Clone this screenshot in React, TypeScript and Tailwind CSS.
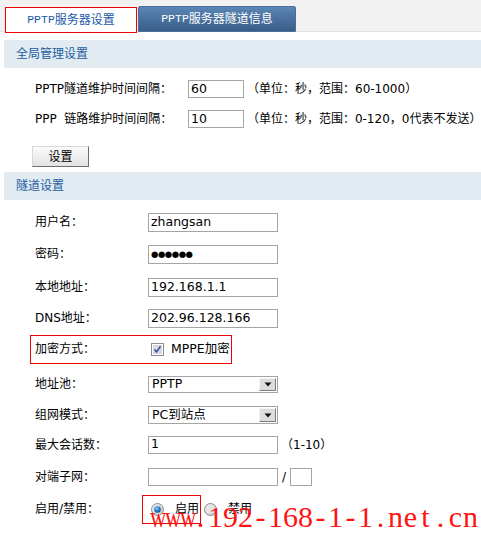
import React from "react";

const FONT = "font-['DejaVu_Sans','Noto_Sans_CJK_SC',sans-serif]";

function Input({ w = "w-[130px]", h = "h-[19px]", children }: { w?: string; h?: string; children?: React.ReactNode }) {
  return (
    <div className={`${w} ${h} border border-[#a5a5a5] bg-white flex items-center pl-[2px] text-[12.5px] text-black leading-none overflow-hidden`}>
      {children}
    </div>
  );
}

function Select({ h, children }: { h: string; children: React.ReactNode }) {
  return (
    <div className={`w-[130px] ${h} border border-[#a5a5a5] bg-white flex items-stretch text-[12.5px] text-black leading-none`}>
      <div className="flex-1 flex items-center pl-[3px]">{children}</div>
      <div className="w-[17px] m-[1px] bg-[#dcdcdc] border border-t-[#f4f4f4] border-l-[#f4f4f4] border-b-[#7c7c7c] border-r-[#7c7c7c] flex items-center justify-center">
        <svg width="8" height="5" viewBox="0 0 8 5">
          <path d="M0.5 0.5 H7.5 L4 4.5 Z" fill="#111" />
        </svg>
      </div>
    </div>
  );
}

function Radio({ on }: { on: boolean }) {
  return (
    <svg width="13" height="13" viewBox="0 0 13 13" className="shrink-0">
      <defs>
        <linearGradient id={on ? "rgOn" : "rgOff"} x1="0" y1="0" x2="1" y2="1">
          <stop offset="0" stopColor="#f4f4f4" />
          <stop offset="1" stopColor="#c4c4c4" />
        </linearGradient>
        <radialGradient id="dot" cx="0.4" cy="0.35" r="0.7">
          <stop offset="0" stopColor="#8fd0ff" />
          <stop offset="0.5" stopColor="#2a82d8" />
          <stop offset="1" stopColor="#123f86" />
        </radialGradient>
      </defs>
      <circle cx="6.5" cy="6.5" r="6" fill={`url(#${on ? "rgOn" : "rgOff"})`} stroke="#8c8c8c" strokeWidth="1" />
      {on ? <circle cx="6.5" cy="6.5" r="3.3" fill="url(#dot)" /> : <circle cx="6.5" cy="6.5" r="3.8" fill="#e6e6e6" />}
    </svg>
  );
}

function Checkbox() {
  return (
    <svg width="13" height="13" viewBox="0 0 13 13" className="shrink-0">
      <rect x="0.5" y="0.5" width="12" height="12" fill="#fff" stroke="#8e8e8e" />
      <rect x="2" y="2" width="9" height="9" fill="#d6dbe6" />
      <path d="M3.5 6.5 L5.5 9 L9.5 3.2" fill="none" stroke="#3f4fa0" strokeWidth="1.6" />
    </svg>
  );
}

function Row({ h, label, children }: { h: string; label: string; children: React.ReactNode }) {
  return (
    <div className={`${h} flex items-center pl-[35px]`}>
      <div className="w-[113px] shrink-0">{label}</div>
      {children}
    </div>
  );
}

const WM = "www.192-168-1-1.net.cn".split("");

export default function App() {
  return (
    <div className={`relative w-[481px] h-[534px] bg-white overflow-hidden text-[12px] text-black ${FONT}`}>
      {/* Tabs */}
      <div className="h-[32px] bg-[#f2f2f2] border-b border-[#e3e3e3] flex pl-[5px] gap-[1px]">
        <div className="mt-[7px] h-[26px] w-[132px] border border-[#f00000] bg-white flex items-center justify-center text-[12px] text-[#1a5aa6] leading-none">
          <span className="font-['Liberation_Mono',monospace] text-[11.5px]">PPTP</span>
          <span>服务器设置</span>
        </div>
        <div className="mt-[6px] h-[26px] w-[158px] rounded-t-[2px] border border-[#4c6f98] bg-gradient-to-b from-[#5b86b6] to-[#385d89] flex items-center justify-center text-[12px] text-white leading-none">
          <span className="font-['Liberation_Mono',monospace] text-[11.5px]">PPTP</span>
          <span>服务器隧道信息</span>
        </div>
      </div>

      {/* 全局管理设置 */}
      <div className="mt-[8px] ml-[4px] h-[28px] bg-[#e2ebf2] flex items-center pl-[12px] text-[#1d5d9f]">
        全局管理设置
      </div>
      <div className="pt-[6px]">
        <div className="h-[30px] flex items-center pl-[35px]">
          <div className="w-[153px] shrink-0">PPTP隧道维护时间间隔：</div>
          <Input w="w-[56px]" h="h-[18px]">60</Input>
          <div className="ml-[3px]">（单位：秒，范围：60-1000）</div>
        </div>
        <div className="h-[30px] flex items-center pl-[35px]">
          <div className="w-[153px] shrink-0 whitespace-pre">PPP  链路维护时间间隔：</div>
          <Input w="w-[56px]" h="h-[18px]">10</Input>
          <div className="ml-[3px]">（单位：秒，范围：0-120，0代表不发送）</div>
        </div>
        <div className="pl-[32px] mt-[12px]">
          <button className="w-[57px] h-[21px] bg-gradient-to-b from-[#fbfbfb] to-[#e2e2e2] border border-t-[#d8d8d8] border-l-[#d8d8d8] border-b-[#6e6e6e] border-r-[#6e6e6e] text-[12px] leading-none text-black">
            设置
          </button>
        </div>
      </div>

      {/* 隧道设置 */}
      <div className="mt-[5px] ml-[4px] h-[28px] bg-[#e2ebf2] flex items-center pl-[12px] text-[#1d5d9f]">
        隧道设置
      </div>
      <div className="pt-[6px]">
        <Row h="h-[32px]" label="用户名：">
          <Input>zhangsan</Input>
        </Row>
        <Row h="h-[32px]" label="密码：">
          <Input>
            <span className="text-[8.5px] tracking-[-0.5px]">●●●●●●</span>
          </Input>
        </Row>
        <Row h="h-[34px]" label="本地地址：">
          <Input>192.168.1.1</Input>
        </Row>
        <Row h="h-[28px]" label="DNS地址：">
          <Input>202.96.128.166</Input>
        </Row>
        <div className="h-[34px] flex items-center pl-[30px]">
          <div className="w-[202px] h-[29px] border border-[#f00000] flex items-center pl-[4px]">
            <div className="w-[116px] shrink-0">加密方式：</div>
            <Checkbox />
            <span className="ml-[7px] text-[12.5px]">MPPE加密</span>
          </div>
        </div>
        <Row h="h-[36px]" label="地址池：">
          <Select h="h-[17px]">PPTP</Select>
        </Row>
        <Row h="h-[26px]" label="组网模式：">
          <Select h="h-[18px]">PC到站点</Select>
        </Row>
        <Row h="h-[33px]" label="最大会话数：">
          <Input h="h-[18px]">1</Input>
          <span className="ml-[3px]">（1-10）</span>
        </Row>
        <Row h="h-[32px]" label="对端子网：">
          <Input h="h-[18px]"></Input>
          <span className="ml-[4px]">/</span>
          <div className="ml-[4px]">
            <Input w="w-[22px]" h="h-[18px]"></Input>
          </div>
        </Row>
        <div className="h-[32px] flex items-center pl-[35px]">
          <div className="w-[107px] shrink-0">启用/禁用：</div>
          <div className="w-[59px] h-[29px] border border-[#f00000] flex items-center pl-[8px]">
            <Radio on />
            <span className="ml-[11px]">启用</span>
          </div>
          <div className="ml-[3px] flex items-center">
            <Radio on={false} />
            <span className="ml-[11px]">禁用</span>
          </div>
        </div>
      </div>

      {/* watermark */}
      <div className="absolute left-[148px] top-[502px] flex font-['Liberation_Serif',serif] text-[30px] leading-[30px] text-[#ff1414] pointer-events-none">
        {WM.map((c, i) => (
          <span key={i} className={`inline-block w-[15px] text-center ${c === "w" ? "scale-x-75" : ""}`}>
            {c}
          </span>
        ))}
      </div>
    </div>
  );
}
